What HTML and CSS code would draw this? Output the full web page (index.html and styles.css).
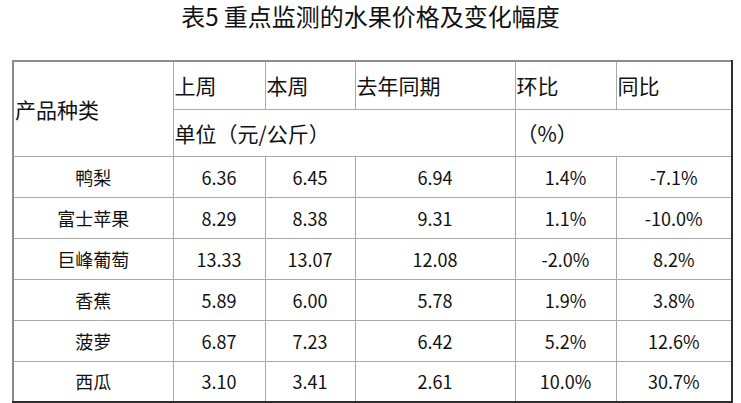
FILE: index.html
```html
<!DOCTYPE html>
<html lang="zh-CN">
<head>
<meta charset="utf-8">
<title>表5 重点监测的水果价格及变化幅度</title>
<link rel="stylesheet" href="styles.css">
</head>
<body>
<h1 class="title">表5 重点监测的水果价格及变化幅度</h1>
<table class="price-table">
  <colgroup>
    <col class="c-name">
    <col class="c-last">
    <col class="c-this">
    <col class="c-year">
    <col class="c-mom">
    <col class="c-yoy">
  </colgroup>
  <thead>
    <tr class="head-1">
      <th rowspan="2">产品种类</th>
      <th>上周</th>
      <th>本周</th>
      <th>去年同期</th>
      <th>环比</th>
      <th>同比</th>
    </tr>
    <tr class="head-2">
      <th colspan="3">单位（元/公斤）</th>
      <th colspan="2">（%）</th>
    </tr>
  </thead>
  <tbody>
    <tr><td>鸭梨</td><td>6.36</td><td>6.45</td><td>6.94</td><td>1.4%</td><td>-7.1%</td></tr>
    <tr><td>富士苹果</td><td>8.29</td><td>8.38</td><td>9.31</td><td>1.1%</td><td>-10.0%</td></tr>
    <tr><td>巨峰葡萄</td><td>13.33</td><td>13.07</td><td>12.08</td><td>-2.0%</td><td>8.2%</td></tr>
    <tr><td>香蕉</td><td>5.89</td><td>6.00</td><td>5.78</td><td>1.9%</td><td>3.8%</td></tr>
    <tr><td>菠萝</td><td>6.87</td><td>7.23</td><td>6.42</td><td>5.2%</td><td>12.6%</td></tr>
    <tr><td>西瓜</td><td>3.10</td><td>3.41</td><td>2.61</td><td>10.0%</td><td>30.7%</td></tr>
  </tbody>
</table>
</body>
</html>
```

FILE: styles.css
```css
html, body {
  margin: 0;
  padding: 0;
  background: #ffffff;
}

body {
  font-family: "Noto Sans CJK SC", "Noto Sans", sans-serif;
  color: #111111;
}

.title {
  margin: 0 0 28px;
  padding: 0;
  line-height: 32px;
  font-size: 24px;
  font-weight: 400;
  text-align: center;
  color: #111111;
}

.price-table {
  margin-left: 12px;
  width: 719px;
  table-layout: fixed;
  border-collapse: collapse;
  border-top: 2px solid #8c8c8c;
  border-left: 2px solid #8c8c8c;
  border-right: 2px solid #2e2e2e;
  border-bottom: 2px solid #2e2e2e;
}

.c-name { width: 160px; }
.c-last { width: 92px; }
.c-this { width: 90px; }
.c-year { width: 160px; }
.c-mom  { width: 101px; }
.c-yoy  { width: 116px; }

.price-table th,
.price-table td {
  border: 1px solid #a9a9a9;
  padding: 0 1px;
  vertical-align: middle;
  white-space: nowrap;
}

.price-table th {
  font-size: 21px;
  font-weight: 400;
  text-align: left;
}

.price-table td {
  font-size: 18px;
  text-align: center;
}

.head-1 { height: 48px; }
.head-2 { height: 47px; }
.price-table tbody tr { height: 41px; }
```
